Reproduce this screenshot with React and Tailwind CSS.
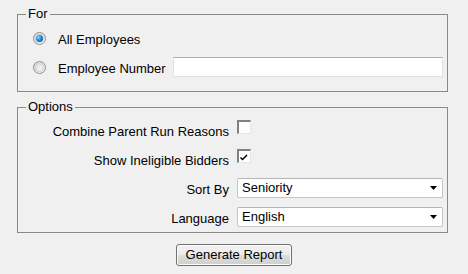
import React from 'react';

const font = { fontFamily: '"Liberation Sans", Arial, sans-serif' };

const Radio = ({ checked }) => (
  <span className="flex h-[13px] w-[13px] shrink-0 items-center justify-center rounded-full border border-[#8f8f8f] bg-gradient-to-br from-[#d4d4d4] to-[#fafafa]">
    <span className="flex h-[9px] w-[9px] items-center justify-center rounded-full border border-[#d0d0d0] bg-gradient-to-br from-[#e2e2e2] to-[#f7f7f7]">
      {checked && (
        <span className="h-[7px] w-[7px] rounded-full bg-[radial-gradient(circle_at_35%_35%,#8fd3ff_0%,#1b8ad6_45%,#0a4f8c_100%)]" />
      )}
    </span>
  </span>
);

const Checkbox = ({ checked }) => (
  <span className="relative block h-[14px] w-[14px] border-t-2 border-l-2 border-r border-b border-t-[#808080] border-l-[#808080] border-r-[#e6e6e6] border-b-[#e6e6e6] bg-white">
    {checked && (
      <svg className="absolute left-[1px] top-[3px]" width="8" height="7" viewBox="0 0 8 7">
        <path d="M0.5 3.5 L2.5 5.5 L7 1" fill="none" stroke="#000" strokeWidth="1.5" />
      </svg>
    )}
  </span>
);

const Select = ({ value }) => (
  <div className="flex h-[20px] items-center justify-between rounded-[2px] border border-[#c5c5c5] border-t-[#b5b5b5] bg-white pl-[4px] pr-[4px] leading-[16px]">
    <span>{value}</span>
    <svg width="7" height="4" viewBox="0 0 7 4" className="mr-[1px]">
      <path d="M0 0 H7 L3.5 4 Z" fill="#000" />
    </svg>
  </div>
);

const Label = ({ children }) => (
  <div className="pt-[4px] text-right leading-[16px]">{children}</div>
);

export default function App() {
  return (
    <div className="min-h-[274px] w-[468px] bg-[#f0f0f0] text-[13px] text-black" style={font}>
      <div className="pl-[17px] pr-[20px] pt-[6px]">
        <fieldset className="m-0 border border-[#898989] p-0">
          <legend className="ml-[8px] px-[2px] leading-[16px]">For</legend>
          <div className="flex flex-col gap-[9px] pb-[14px] pl-[15px] pr-[4px] pt-[6px]">
            <div className="flex h-[20px] items-center">
              <Radio checked />
              <span className="ml-[12px] pt-[3px] leading-[16px]">All Employees</span>
            </div>
            <div className="flex h-[20px] items-center">
              <Radio />
              <span className="ml-[12px] pt-[3px] leading-[16px]">Employee Number</span>
              <input
                type="text"
                className="ml-[7px] h-[20px] flex-1 border border-[#dfe3e8] border-t-[#abadb3] bg-white px-1 outline-none"
              />
            </div>
          </div>
        </fieldset>

        <fieldset className="m-0 mt-[7px] border border-[#898989] p-0">
          <legend className="ml-[8px] px-[2px] leading-[16px]">Options</legend>
          <div className="grid grid-cols-[211px_1fr] gap-x-[8px] gap-y-[9px] pb-[5px] pr-[4px] pt-[5px]">
            <Label>Combine Parent Run Reasons</Label>
            <div className="h-[20px]">
              <Checkbox />
            </div>
            <Label>Show Ineligible Bidders</Label>
            <div className="h-[20px]">
              <Checkbox checked />
            </div>
            <Label>Sort By</Label>
            <Select value="Seniority" />
            <Label>Language</Label>
            <Select value="English" />
          </div>
        </fieldset>
      </div>

      <div className="flex justify-center pt-[11px]">
        <button className="h-[22px] w-[116px] rounded-[3px] border border-[#707070] bg-[linear-gradient(to_bottom,#f2f2f2_0%,#ebebeb_50%,#dddddd_51%,#cfcfcf_100%)] leading-[16px] shadow-[inset_0_0_0_1px_#fcfcfc]">
          Generate Report
        </button>
      </div>
    </div>
  );
}
